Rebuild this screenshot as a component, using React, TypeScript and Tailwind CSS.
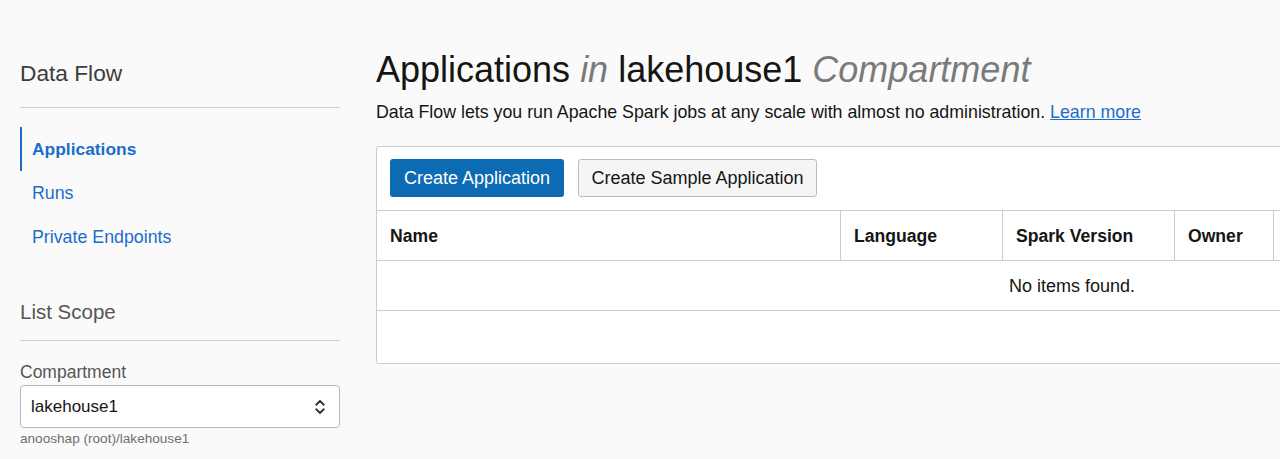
import { ChevronsUpDown } from "lucide-react";

const navItems = [
  { label: "Applications", active: true },
  { label: "Runs", active: false },
  { label: "Private Endpoints", active: false },
];

const columns = [
  { label: "Name", w: "w-[463px]" },
  { label: "Language", w: "w-[162px]" },
  { label: "Spark Version", w: "w-[172px]" },
  { label: "Owner", w: "w-[99px]" },
  { label: "", w: "w-[140px]" },
  { label: "", w: "w-[354px]" },
];

function Sidebar() {
  return (
    <aside className="w-[320px] shrink-0">
      <div className="pt-[58px] pb-[19px] border-b border-[#c9ccd1]">
        <h1 className="text-[22.7px] leading-[30px] text-[#3c3c3c]">Data Flow</h1>
      </div>

      <nav className="mt-[19px] flex flex-col">
        {navItems.map((item) => (
          <a
            key={item.label}
            href="#"
            className={
              item.active
                ? "h-[44px] flex items-center pl-[10px] pt-[1px] border-l-2 border-[#1a6dcc] text-[17.4px] font-bold text-[#1a6dcc]"
                : "h-[44px] flex items-center pl-[12px] pt-[1px] text-[17.8px] text-[#1a6dcc]"
            }
          >
            {item.label}
          </a>
        ))}
      </nav>

      <div className="mt-[38px] pb-[13px] border-b border-[#c9ccd1]">
        <h2 className="text-[20.5px] leading-[30px] text-[#555]">List Scope</h2>
      </div>

      <label className="block mt-[21px] text-[17.5px] leading-[20px] text-[#555]">Compartment</label>
      <div className="mt-[3px] h-[43px] flex items-center justify-between px-[10px] bg-white border border-[#b5b8bd] rounded-[4px]">
        <span className="text-[17px] text-[#161513]">lakehouse1</span>
        <ChevronsUpDown className="w-[18px] h-[18px] text-[#333]" strokeWidth={2.5} />
      </div>
      <p className="mt-[4px] text-[13.6px] leading-[14px] text-[#6f6f6f]">anooshap (root)/lakehouse1</p>
    </aside>
  );
}

function AppsTable() {
  return (
    <div className="mt-[24px] w-[1392px] bg-white border border-[#c9ccd1] rounded-tl-[3px] rounded-bl-[3px]">
      <div className="flex gap-[14px] pl-[13px] pt-[12px] pb-[13px]">
        <button className="h-[38px] w-[174px] rounded-[3px] bg-[#0d6bb3] text-white text-[18px]">
          Create Application
        </button>
        <button className="h-[38px] w-[239px] rounded-[3px] bg-[#f5f5f5] border border-[#b9bcc1] text-[#161513] text-[18px]">
          Create Sample Application
        </button>
      </div>

      <div className="flex h-[51px] border-t border-b border-[#c9ccd1]">
        {columns.map((c, i) => (
          <div
            key={i}
            className={
              i === 0
                ? `${c.w} shrink-0 flex items-center pt-[2px] px-[13px] text-[17.6px] font-bold text-[#161513]`
                : `${c.w} shrink-0 flex items-center pt-[2px] px-[13px] border-l border-[#c9ccd1] text-[17.6px] font-bold text-[#161513]`
            }
          >
            {c.label}
          </div>
        ))}
      </div>

      <div className="h-[50px] flex items-center justify-center pt-[2px] border-b border-[#c9ccd1] text-[18px] text-[#161513]">
        No items found.
      </div>
      <div className="h-[52px]" />
    </div>
  );
}

export default function App() {
  return (
    <div
      className="w-[1280px] h-[459px] overflow-hidden bg-[#fafafa] flex gap-[36px] px-[20px]"
      style={{ fontFamily: '"Liberation Sans", Arial, sans-serif' }}
    >
      <Sidebar />
      <main className="min-w-0">
        <h1 className="pt-[48px] text-[36px] leading-[44px] text-[#161513] whitespace-nowrap">
          Applications <i className="text-[#7a7a7a]">in</i> lakehouse1{" "}
          <i className="text-[#7a7a7a]">Compartment</i>
        </h1>
        <p className="mt-[10px] text-[17.8px] leading-[20px] text-[#161513] whitespace-nowrap">
          Data Flow lets you run Apache Spark jobs at any scale with almost no administration.{" "}
          <a href="#" className="text-[#1a6dcc] underline">Learn more</a>
        </p>
        <AppsTable />
      </main>
    </div>
  );
}
